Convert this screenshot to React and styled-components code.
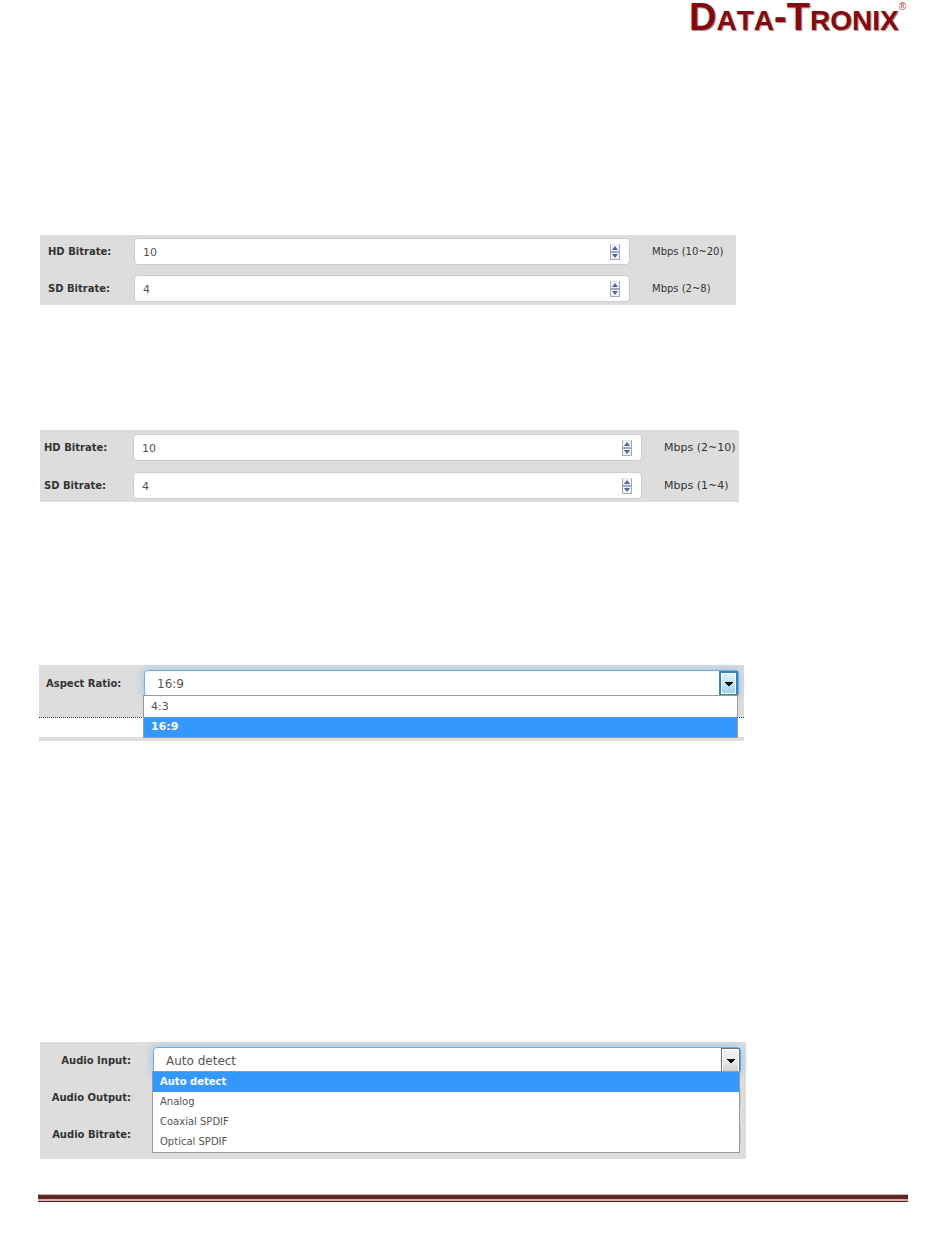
import React, { useState } from 'react';
import styled, { createGlobalStyle, css } from 'styled-components';

const GlobalStyle = createGlobalStyle`
  * {
    box-sizing: border-box;
  }
  body {
    margin: 0;
    background: #ffffff;
    color: #333333;
    font-family: "DejaVu Sans", Verdana, sans-serif;
    font-size: 10px;
  }
`;

const Page = styled.div`
  min-height: 100vh;
  padding: 0 42px 46px 38px;
`;

const Header = styled.header`
  display: flex;
  justify-content: flex-end;
  height: 35px;
  padding-right: 2px;
`;

const Logo = styled.div`
  display: flex;
  align-items: flex-start;
  font-family: "Liberation Sans", Arial, sans-serif;
  font-weight: 700;
  font-size: 38px;
  font-kerning: none;
  line-height: 34px;
  color: #850a10;
  text-shadow: 1px 1px 1px rgba(60, 20, 20, 0.5);
  white-space: nowrap;

  small {
    font-size: 28px;
  }
  sup {
    font-size: 10px;
    line-height: 14px;
    font-weight: 400;
    color: #a04045;
    text-shadow: none;
  }
`;

const Panel = styled.section`
  margin: ${p => p.$top}px ${p => p.$right}px 0 ${p => p.$left}px;
  background: #dddddd;
`;

const Rows = styled.div`
  display: grid;
  row-gap: ${p => p.$gap || 10}px;
  padding: ${p => p.$pad};
`;

const Row = styled.div`
  display: grid;
  grid-template-columns: ${p => p.$cols};
  align-items: center;
`;

const Label = styled.label`
  padding-left: ${p => p.$indent || 0}px;
  font-weight: 700;
  line-height: 14px;
  white-space: nowrap;
  ${p => p.$alignRight && css`
    padding-right: 22px;
    text-align: right;
  `}
`;

const Unit = styled.span`
  padding-left: 22px;
  font-size: ${p => p.$size}px;
  line-height: 14px;
  white-space: nowrap;
`;

const Field = styled.div`
  position: relative;
  height: 27px;
`;

const NumberInput = styled.input`
  display: block;
  width: 100%;
  height: 27px;
  padding: 2px 30px 0 8px;
  border: 1px solid #cccccc;
  border-radius: 4px;
  background: #ffffff;
  color: #555555;
  font-family: inherit;
  font-size: 11px;
  outline: none;
  appearance: textfield;

  &::-webkit-inner-spin-button,
  &::-webkit-outer-spin-button {
    appearance: none;
    margin: 0;
  }
`;

const Spinner = styled.div`
  position: absolute;
  top: 6px;
  right: 10px;
  display: grid;
  width: 10px;
`;

const SpinButton = styled.button`
  display: flex;
  align-items: center;
  justify-content: center;
  height: 8px;
  padding: 0;
  border: 1px solid #a8a8b0;
  border-top-color: ${p => (p.$up ? '#e4e4e8' : '#a8a8b0')};
  background: #f4f4f6;
`;

const Select = styled.select`
  display: block;
  width: 100%;
  height: 27px;
  padding: 0 30px 0 12px;
  border: 1px solid ${p => (p.$open ? '#66afe9' : '#cccccc')};
  border-radius: 4px;
  background: #ffffff;
  color: #555555;
  font-family: inherit;
  font-size: 12px;
  outline: none;
  appearance: none;
  box-shadow: ${p => (p.$open ? '0 0 8px rgba(102, 175, 233, 0.6)' : 'none')};
`;

const Arrow = styled.span`
  position: absolute;
  top: 1px;
  right: 1px;
  display: flex;
  align-items: center;
  justify-content: center;
  width: 19px;
  height: 25px;
  border: ${p => (p.$hot ? '2px solid #3c7fb1' : '1px solid #707070')};
  background: ${p => (p.$hot
    ? 'linear-gradient(#e3f4fc, #c4e5f6 50%, #98d1ef)'
    : 'linear-gradient(#f2f2f2, #ebebeb 50%, #cfcfcf)')};
  box-shadow: inset 0 0 0 1px #ffffff;
  pointer-events: none;
`;

const Menu = styled.ul`
  position: absolute;
  top: ${p => (p.$spaced ? 25 : 24)}px;
  left: -1px;
  right: 1px;
  z-index: 2;
  margin: 0;
  padding: ${p => (p.$spaced ? 1 : 0)}px 0 0;
  border: 1px solid #999999;
  background: #ffffff;
  list-style: none;
`;

const Option = styled.li`
  height: 20px;
  padding-left: 7px;
  line-height: 20px;
  font-size: ${p => p.$size}px;
  font-weight: ${p => (p.$active ? 700 : 400)};
  color: ${p => (p.$active ? '#ffffff' : '#555555')};
  background: ${p => (p.$active ? '#3399ff' : '#ffffff')};
  cursor: default;
`;

const NextRow = styled.div`
  height: 20px;
  margin-top: 20px;
  border-top: 1px dotted #333333;
  background: #ffffff;
`;

const PanelEnd = styled.div`
  height: 4px;
`;

const FooterRule = styled.footer`
  height: 8px;
  margin-top: 35px;
  border-top: 1px solid #c5b5b2;
  border-bottom: 1px solid #622423;
  background: linear-gradient(#622423 4px, #d0b0b0 4px);
`;

function BitrateRow({ id, label, initial, min, max, cols, indent, unitSize }) {
  const [value, setValue] = useState(initial);
  const step = by => setValue(v => Math.min(max, Math.max(min, Number(v) + by)));

  return (
    <Row $cols={cols}>
      <Label htmlFor={id} $indent={indent}>{label}</Label>
      <Field>
        <NumberInput
          id={id}
          type="number"
          min={min}
          max={max}
          value={value}
          onChange={e => setValue(e.target.value)}
        />
        <Spinner>
          <SpinButton type="button" $up aria-label={`Increase ${label}`} onClick={() => step(1)}>
            <svg width="6" height="4" viewBox="0 0 6 4"><path d="M3 0L6 4H0z" fill="#5060b0" /></svg>
          </SpinButton>
          <SpinButton type="button" aria-label={`Decrease ${label}`} onClick={() => step(-1)}>
            <svg width="6" height="4" viewBox="0 0 6 4"><path d="M0 0H6L3 4z" fill="#5060b0" /></svg>
          </SpinButton>
        </Spinner>
      </Field>
      <Unit $size={unitSize}>{`Mbps (${min}~${max})`}</Unit>
    </Row>
  );
}

function OpenSelect({ id, options, initial, hot, spaced, optionSize }) {
  const [value, setValue] = useState(initial);

  return (
    <Field>
      <Select id={id} $open value={value} onChange={e => setValue(e.target.value)}>
        {options.map(o => <option key={o}>{o}</option>)}
      </Select>
      <Arrow $hot={hot}>
        <svg width="8" height="4" viewBox="0 0 8 4" shapeRendering="crispEdges">
          <path d="M0 0H8V1H7V2H6V3H5V4H3V3H2V2H1V1H0z" fill="#000000" />
        </svg>
      </Arrow>
      <Menu role="listbox" $spaced={spaced}>
        {options.map(o => (
          <Option
            key={o}
            role="option"
            aria-selected={o === value}
            $active={o === value}
            $size={optionSize}
            onClick={() => setValue(o)}
          >
            {o}
          </Option>
        ))}
      </Menu>
    </Field>
  );
}

const App = () => (
  <>
    <GlobalStyle />
    <Page>
      <Header>
        <Logo>
          <span>D<small>ATA</small>-T<small>RONIX</small></span>
          <sup>®</sup>
        </Logo>
      </Header>

      <Panel $top={200} $right={172} $left={2}>
        <Rows $pad="3px 0">
          <BitrateRow id="hd-high" label="HD Bitrate:" initial={10} min={10} max={20} cols="94px 1fr 106px" indent={8} unitSize={10} />
          <BitrateRow id="sd-high" label="SD Bitrate:" initial={4} min={2} max={8} cols="94px 1fr 106px" indent={8} unitSize={10} />
        </Rows>
      </Panel>

      <Panel $top={125} $right={169} $left={2}>
        <Rows $pad="4px 0 3px" $gap={11}>
          <BitrateRow id="hd-low" label="HD Bitrate:" initial={10} min={2} max={10} cols="93px 1fr 97px" indent={4} unitSize={11} />
          <BitrateRow id="sd-low" label="SD Bitrate:" initial={4} min={1} max={4} cols="93px 1fr 97px" indent={4} unitSize={11} />
        </Rows>
      </Panel>

      <Panel $top={163} $right={164} $left={1}>
        <Rows $pad="5px 5px 0 0">
          <Row $cols="105px 1fr">
            <Label htmlFor="aspect" $indent={7}>Aspect Ratio:</Label>
            <OpenSelect id="aspect" options={['4:3', '16:9']} initial="16:9" hot spaced optionSize={11} />
          </Row>
        </Rows>
        <NextRow />
        <PanelEnd />
      </Panel>

      <Panel $top={301} $right={162} $left={2}>
        <Rows $pad="5px 5px 11px 0">
          <Row $cols="113px 1fr">
            <Label htmlFor="audio-in" $alignRight>Audio Input:</Label>
            <OpenSelect
              id="audio-in"
              options={['Auto detect', 'Analog', 'Coaxial SPDIF', 'Optical SPDIF']}
              initial="Auto detect"
              optionSize={10}
            />
          </Row>
          <Row $cols="113px 1fr">
            <Label htmlFor="audio-out" $alignRight>Audio Output:</Label>
            <Field><Select id="audio-out" /></Field>
          </Row>
          <Row $cols="113px 1fr">
            <Label htmlFor="audio-rate" $alignRight>Audio Bitrate:</Label>
            <Field><Select id="audio-rate" /></Field>
          </Row>
        </Rows>
      </Panel>

      <FooterRule />
    </Page>
  </>
);

export default App;
